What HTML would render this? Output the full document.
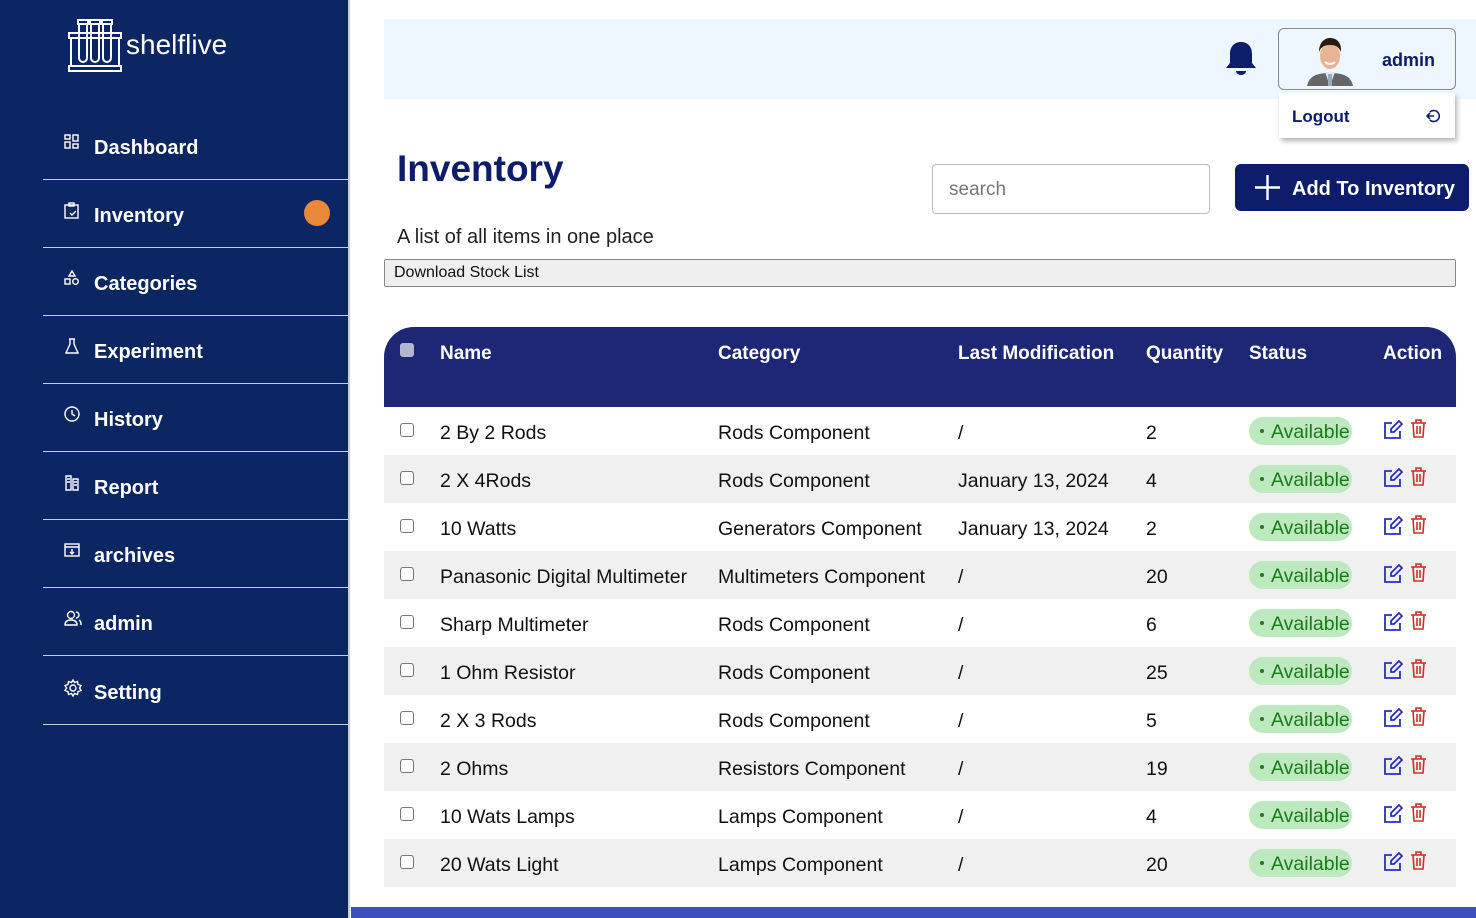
<!DOCTYPE html>
<html><head><meta charset="utf-8"><style>
*{box-sizing:border-box;margin:0;padding:0}
body{width:1476px;height:918px;overflow:hidden;background:#fff;font-family:"Liberation Sans","DejaVu Sans",sans-serif;position:relative}
.side{position:absolute;left:0;top:0;width:350px;height:918px;background:#0b2663;border-right:2px solid #c9cfe0}
.logo{position:absolute;left:68px;top:17px;color:#fff;font-size:28px;display:flex;align-items:center;gap:4px}
.nav{position:absolute;left:43px;width:306px;color:#fff;font-size:20px;font-weight:bold;height:68px;border-bottom:1.5px solid #c9cfe0}
.nav span.t{position:absolute;left:51px;top:25px}
.nav svg{position:absolute;left:21px;top:22px}
.dot{position:absolute;left:261px;top:20px;width:26px;height:26px;border-radius:50%;background:#e8893a}
.topbar{position:absolute;left:384px;top:19px;width:1092px;height:80px;background:#eef6ff}
.user{position:absolute;left:1278px;top:28px;width:178px;height:62px;border:1.5px solid #888;border-radius:6px;background:#eef6ff}
.user b{position:absolute;left:103px;top:21px;color:#0d1c6b;font-size:18px}
.logout{position:absolute;left:1279px;top:93px;width:176px;height:45px;background:#fff;box-shadow:2px 3px 5px rgba(0,0,0,.3);color:#0d1c6b;font-weight:bold;font-size:17px}
h1{position:absolute;left:397px;top:148px;font-size:37px;color:#0d1c6b}
.sub{position:absolute;left:397px;top:226px;font-size:20px;color:#222}
.search{position:absolute;left:932px;top:164px;width:278px;height:50px;border:1px solid #bbb;border-radius:4px;color:#777;font-size:19px;padding:14px 16px}
.add{position:absolute;left:1235px;top:164px;width:234px;height:47px;background:#0d1c6b;border-radius:6px;color:#fff;font-weight:bold;font-size:20px}
.dl{position:absolute;left:384px;top:259px;width:1072px;height:28px;background:#efefef;border:1px solid #888;border-radius:2px;font-size:16px;padding:4px 9px;color:#111}
.th{position:absolute;left:384px;top:327px;width:1072px;height:80px;background:#1e2676;border-radius:30px 30px 0 0;color:#fff;font-weight:bold;font-size:19px}
.th span,.row span{position:absolute}
.row{position:absolute;left:384px;width:1072px;height:48px;font-size:19.5px;color:#111}
.row span{top:15px}
.cb{position:absolute;left:16px;top:16px;width:14px;height:14px;border:1.5px solid #777;border-radius:3px;background:#fff}
.badge{position:absolute;left:865px;top:10px;width:103px;height:28px;border-radius:14px;background:#bce9bd;color:#1a7a1a;font-size:19.5px;padding:4px 0 0 22px}
.badge:before{content:"";position:absolute;left:11px;top:12px;width:4px;height:4px;border-radius:50%;background:#1a7a1a}
.bottom{position:absolute;left:351px;top:907px;width:1125px;height:11px;background:#3d4fbd}
</style></head><body>
<div class="side">
 <div class="logo"><svg width="54" height="56" viewBox="0 0 54 56" fill="none" stroke="#fff" stroke-width="2"><rect x="1" y="16" width="52" height="5"/><rect x="1" y="49" width="52" height="5"/><path d="M3 21v28M51 21v28"/><path d="M10 3h10v4h-10zM22 3h10v4h-10zM34 3h10v4h-10z"/><path d="M11 7v34a4 4 0 0 0 8 0V7M23 7v34a4 4 0 0 0 8 0V7M35 7v34a4 4 0 0 0 8 0V7"/></svg><span>shelflive</span></div>
 <div class="nav" style="top:112px"><svg width="16" height="16" viewBox="0 0 16 16" fill="none" stroke="#fff" stroke-width="1.4"><rect x="1" y="1" width="5" height="4"/><rect x="9" y="1" width="5" height="6"/><rect x="1" y="8" width="5" height="6"/><rect x="9" y="10" width="5" height="4"/></svg><span class="t">Dashboard</span></div>
 <div class="nav" style="top:180px"><svg width="16" height="17" viewBox="0 0 16 17" fill="none" stroke="#fff" stroke-width="1.4"><rect x="1" y="3" width="13" height="13"/><rect x="5" y="1" width="5" height="3"/><path d="M6 11l2 2 4-4"/></svg><span class="t">Inventory</span><div class="dot"></div></div>
 <div class="nav" style="top:248px"><svg width="16" height="16" viewBox="0 0 16 16" fill="none" stroke="#fff" stroke-width="1.4"><path d="M8 1l3 5H5z"/><rect x="1" y="9" width="5" height="5"/><circle cx="11.5" cy="11.5" r="2.8"/></svg><span class="t">Categories</span></div>
 <div class="nav" style="top:316px"><svg width="16" height="16" viewBox="0 0 16 16" fill="none" stroke="#fff" stroke-width="1.4"><path d="M5 1h6M6 1v5L2 15h12L10 6V1"/></svg><span class="t">Experiment</span></div>
 <div class="nav" style="top:384px"><svg width="16" height="16" viewBox="0 0 16 16" fill="none" stroke="#fff" stroke-width="1.4"><circle cx="8" cy="8" r="7"/><path d="M8 4v4l3 2"/></svg><span class="t">History</span></div>
 <div class="nav" style="top:452px"><svg width="16" height="17" viewBox="0 0 16 17" fill="none" stroke="#fff" stroke-width="1.4"><path d="M2 2h5v14H2zM9 5h5v11H9zM3 5h3M3 8h3M10 8h3M10 11h3"/></svg><span class="t">Report</span></div>
 <div class="nav" style="top:520px"><svg width="16" height="16" viewBox="0 0 16 16" fill="none" stroke="#fff" stroke-width="1.4"><rect x="1" y="2" width="14" height="12"/><path d="M1 5h14M8 7v5M6 10l2 2 2-2"/></svg><span class="t">archives</span></div>
 <div class="nav" style="top:588px"><svg width="18" height="16" viewBox="0 0 18 16" fill="none" stroke="#fff" stroke-width="1.4"><circle cx="7" cy="5" r="3.5"/><path d="M1 15c0-4 3-5 6-5s6 1 6 5zM12 2a3 3 0 0 1 0 6M15 10c2 1 2 3 2 5"/></svg><span class="t">admin</span></div>
 <div class="nav" style="top:657px"><svg width="18" height="18" viewBox="0 0 18 18" fill="none" stroke="#fff" stroke-width="1.4"><circle cx="9" cy="9" r="3"/><path d="M9 1l1.5 2.5 3-1 .5 3 3 1-1.5 2.5 1.5 2.5-3 1-.5 3-3-1L9 17l-1.5-2.5-3 1-.5-3-3-1L2.5 9 1 6.5l3-1 .5-3 3 1z"/></svg><span class="t">Setting</span></div>
</div>
<div class="topbar"></div>
<svg style="position:absolute;left:1224px;top:40px" width="34" height="38" viewBox="0 0 34 38"><path d="M17 2c-7 0-11 5-11 12v9l-4 5h30l-4-5v-9c0-7-4-12-11-12z" fill="#0d1c6b"/><path d="M12 31h10a5 4 0 0 1-10 0z" fill="#0d1c6b"/></svg>
<div class="user"><svg style="position:absolute;left:26px;top:5px" width="50" height="52" viewBox="0 0 50 52"><path d="M2 52c2-10 10-13 23-13s21 3 23 13z" fill="#666"/><path d="M20 38l5 14 5-14z" fill="#dfe8f0"/><rect x="23" y="40" width="4" height="12" fill="#9ab"/><ellipse cx="25" cy="22" rx="10" ry="13" fill="#e8b496"/><path d="M14 18c0-10 6-14 11-14s12 3 11 14c-2-5-5-7-11-7s-9 2-11 7z" fill="#2a1a12"/><path d="M20 28q5 4 10 0" stroke="#fff" stroke-width="2" fill="none"/></svg><b>admin</b></div>
<div class="logout"><span style="position:absolute;left:13px;top:14px">Logout</span><svg style="position:absolute;left:147px;top:16px" width="14" height="14" viewBox="0 0 14 14" fill="none" stroke="#0d1c6b" stroke-width="1.6"><path d="M4 3a5.5 5.5 0 1 1 0 8M1 7h7M4 4L1 7l3 3"/></svg></div>
<h1>Inventory</h1>
<div class="sub">A list of all items in one place</div>
<div class="search">search</div>
<div class="add"><svg style="position:absolute;left:20px;top:11px" width="25" height="25" viewBox="0 0 25 25" stroke="#fff" stroke-width="2.4"><path d="M12.5 0v25M0 12.5h25"/></svg><span style="position:absolute;left:57px;top:14px">Add To Inventory</span></div>
<div class="dl">Download Stock List</div>
<div class="th"><div class="cb" style="top:16px;background:#b3b6cf;border-color:#b3b6cf"></div><span style="left:56px;top:16px">Name</span><span style="left:334px;top:16px">Category</span><span style="left:574px;top:16px">Last Modification</span><span style="left:762px;top:16px">Quantity</span><span style="left:865px;top:16px">Status</span><span style="left:999px;top:16px">Action</span></div>
<div id="rows"></div>
<div class="bottom"></div>
<script>
var d=[["2 By 2 Rods","Rods Component","/","2"],["2 X 4Rods","Rods Component","January 13, 2024","4"],["10 Watts","Generators Component","January 13, 2024","2"],["Panasonic Digital Multimeter","Multimeters Component","/","20"],["Sharp Multimeter","Rods Component","/","6"],["1 Ohm Resistor","Rods Component","/","25"],["2 X 3 Rods","Rods Component","/","5"],["2 Ohms","Resistors Component","/","19"],["10 Wats Lamps","Lamps Component","/","4"],["20 Wats Light","Lamps Component","/","20"]];
var h="";
d.forEach(function(r,i){h+='<div class="row" style="top:'+(407+i*48)+'px;background:'+(i%2?'#f0f0f0':'#fff')+'"><div class="cb"></div><span style="left:56px">'+r[0]+'</span><span style="left:334px">'+r[1]+'</span><span style="left:574px">'+r[2]+'</span><span style="left:762px">'+r[3]+'</span><div class="badge">Available</div>'+
'<svg style="position:absolute;left:999px;top:13px" width="20" height="19" viewBox="0 0 20 19" fill="none" stroke="#2a2fb0" stroke-width="1.8"><path d="M9 3H2v15h15v-7"/><path d="M16 1l3 3-8 8H8V9z"/></svg>'+
'<svg style="position:absolute;left:1026px;top:12px" width="17" height="19" viewBox="0 0 17 19" fill="none" stroke="#d42a2a" stroke-width="1.6"><path d="M1 4h15M6 4V1h5v3M3 4l1 14h9l1-14M7 7v8M10 7v8"/></svg></div>';});
document.getElementById("rows").innerHTML=h;
</script>
</body></html>
